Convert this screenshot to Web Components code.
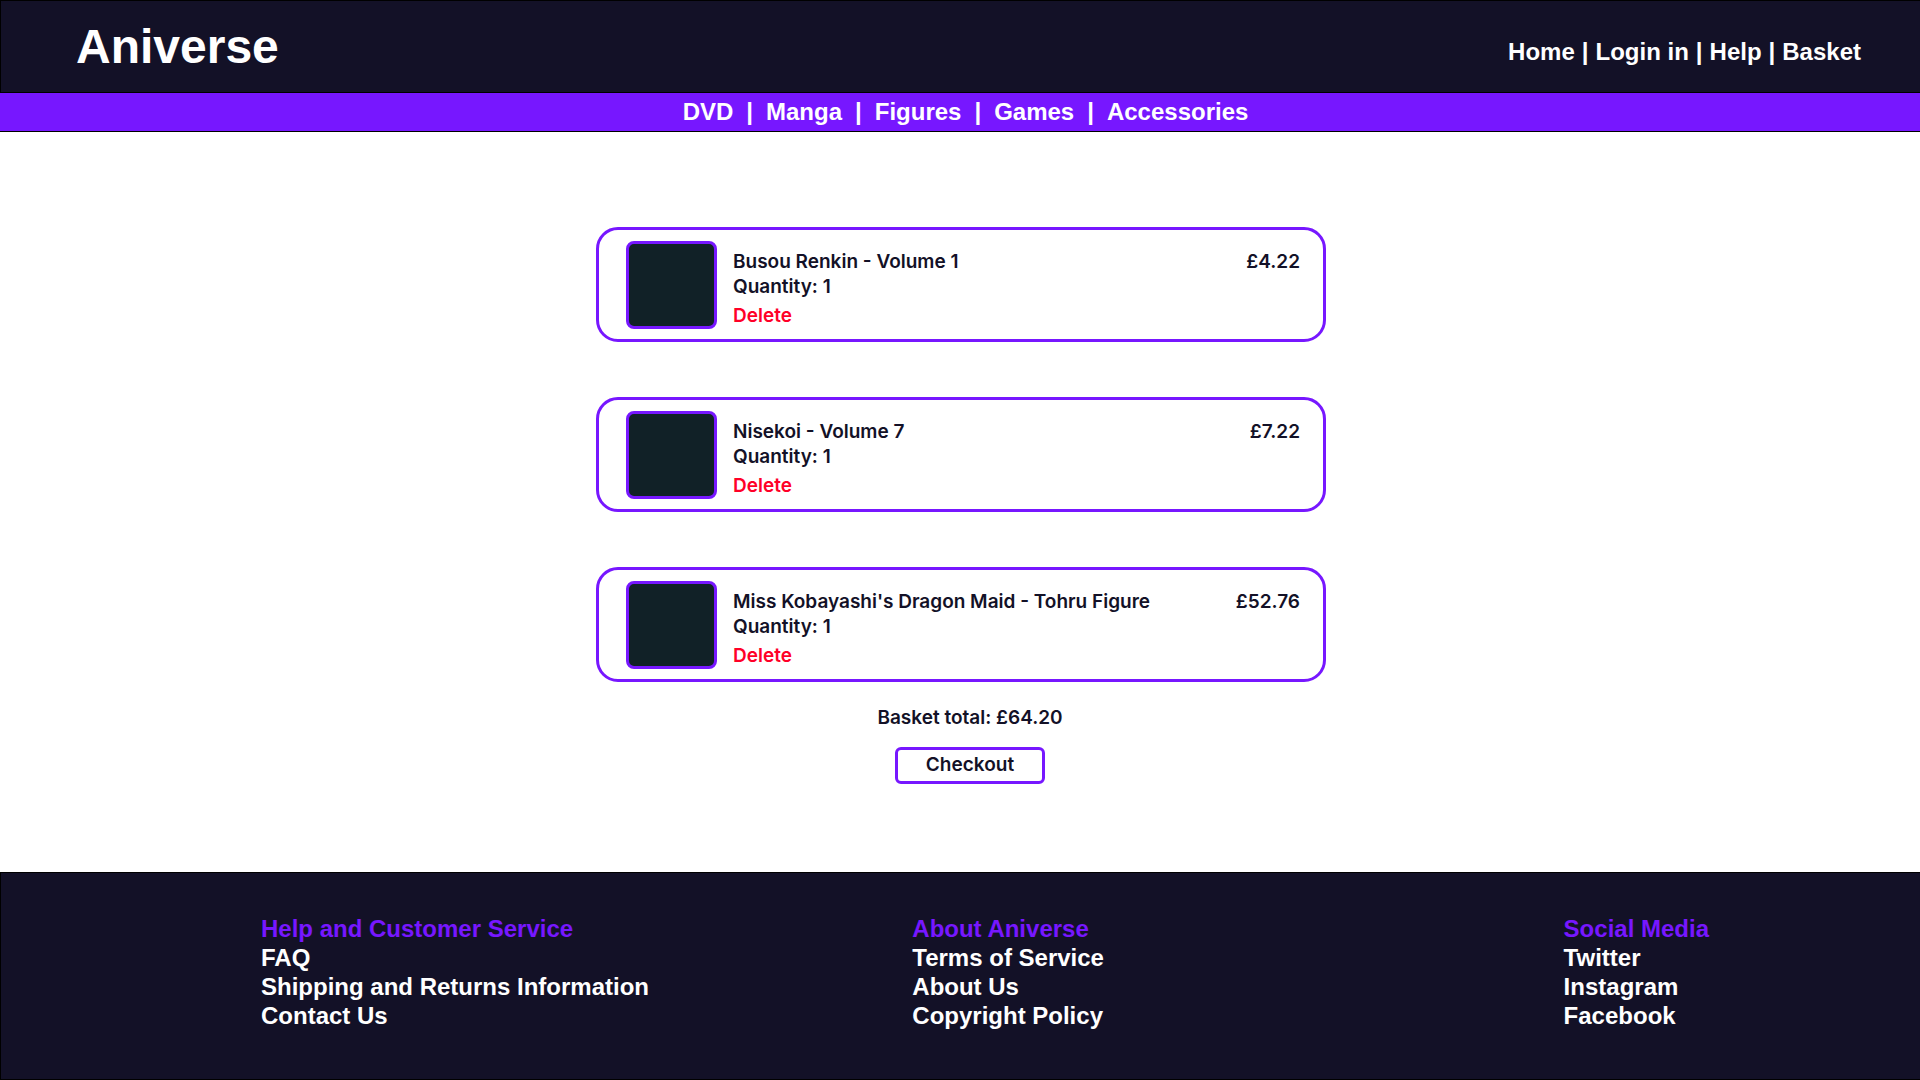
<!DOCTYPE html>
<html lang="en">
<head>
<meta charset="utf-8">
<title>Aniverse - Basket</title>
<style>
  :root {
    --ink: #131127;
    --accent: #7717ff;
    --danger: #ff0028;
  }
  body {
    margin: 0;
    background: #fff;
    color: var(--ink);
    font-family: "Arial Rounded MT Bold", "Liberation Sans", Arial, sans-serif;
    font-weight: 700;
  }
</style>
</head>
<body>
<aniverse-page>
  <site-header slot="header"></site-header>
  <category-nav slot="nav"></category-nav>
  <basket-item price="£4.22" quantity="1">Busou Renkin - Volume 1</basket-item>
  <basket-item price="£7.22" quantity="1">Nisekoi - Volume 7</basket-item>
  <basket-item price="£52.76" quantity="1">Miss Kobayashi's Dragon Maid - Tohru Figure</basket-item>
  <basket-summary slot="summary" total="£64.20"></basket-summary>
  <site-footer slot="footer">
    <footer-column heading="Help and Customer Service" links="FAQ|Shipping and Returns Information|Contact Us"></footer-column>
    <footer-column heading="About Aniverse" links="Terms of Service|About Us|Copyright Policy"></footer-column>
    <footer-column heading="Social Media" links="Twitter|Instagram|Facebook"></footer-column>
  </site-footer>
</aniverse-page>

<script>
class BaseElement extends HTMLElement {
  connectedCallback() {
    if (this.shadowRoot) return;
    this.attachShadow({ mode: "open" }).innerHTML = this.render();
  }
}

const linkRow = (names) => names
  .map((name) => `<a href="#">${name}</a>`)
  .join("<span>|</span>");

customElements.define("aniverse-page", class extends BaseElement {
  render() {
    return `
      <style>
        :host { display: flex; flex-direction: column; min-height: 100vh; }
        main {
          flex: 1;
          display: flex;
          flex-direction: column;
          align-items: center;
          padding: 95px 24px 64px 26px;
          font-family: Inter, "Liberation Sans", sans-serif;
          font-size: 19px;
          font-weight: 600;
          line-height: 25px;
        }
        .items {
          display: flex;
          flex-direction: column;
          gap: 55px;
          width: 100%;
          max-width: 730px;
        }
      </style>
      <slot name="header"></slot>
      <slot name="nav"></slot>
      <main>
        <div class="items"><slot></slot></div>
        <slot name="summary"></slot>
      </main>
      <slot name="footer"></slot>`;
  }
});

customElements.define("site-header", class extends BaseElement {
  render() {
    return `
      <style>
        :host { display: block; }
        header {
          display: flex;
          justify-content: space-between;
          align-items: center;
          box-sizing: border-box;
          min-height: 93px;
          padding: 0 59px 0 75px;
          border: 1px solid #000;
          border-right: 0;
          background: var(--ink);
          color: #fff;
        }
        a { color: inherit; text-decoration: none; }
        .logo { font-size: 48px; line-height: 56px; }
        nav { display: flex; gap: 7px; margin-top: 10px; font-size: 24px; line-height: 29px; }
      </style>
      <header>
        <a class="logo" href="#">Aniverse</a>
        <nav aria-label="Account">${linkRow(["Home", "Login in", "Help", "Basket"])}</nav>
      </header>`;
  }
});

customElements.define("category-nav", class extends BaseElement {
  render() {
    return `
      <style>
        :host { display: block; }
        nav {
          display: flex;
          justify-content: center;
          gap: 13px;
          padding: 4px 0 5px 11px;
          border-bottom: 1px solid #000;
          background: var(--accent);
          color: #fff;
          font-size: 24px;
          line-height: 29px;
        }
        a { color: inherit; text-decoration: none; }
      </style>
      <nav aria-label="Categories">${linkRow(["DVD", "Manga", "Figures", "Games", "Accessories"])}</nav>`;
  }
});

customElements.define("basket-item", class extends BaseElement {
  render() {
    return `
      <style>
        :host { display: block; }
        article {
          display: flex;
          align-items: flex-start;
          gap: 16px;
          padding: 11px 23px 10px 27px;
          border: 3px solid var(--accent);
          border-radius: 22px;
        }
        .cover {
          box-sizing: border-box;
          width: 91px;
          height: 88px;
          border: 3px solid var(--accent);
          border-radius: 8px;
          background: #112127;
        }
        .details { flex: 1; padding-top: 8px; }
        h2, p { margin: 0; font: inherit; }
        button {
          display: block;
          margin: 4px 0 0;
          padding: 0;
          border: 0;
          background: none;
          color: var(--danger);
          font: inherit;
          cursor: pointer;
        }
        .price { padding-top: 8px; }
      </style>
      <article>
        <div class="cover"></div>
        <div class="details">
          <h2><slot></slot></h2>
          <p>Quantity: ${this.getAttribute("quantity")}</p>
          <button type="button">Delete</button>
        </div>
        <p class="price">${this.getAttribute("price")}</p>
      </article>`;
  }
});

customElements.define("basket-summary", class extends BaseElement {
  render() {
    return `
      <style>
        :host {
          display: flex;
          flex-direction: column;
          align-items: center;
          gap: 17px;
          padding: 23px 0 0 18px;
        }
        p { margin: 0; }
        button {
          padding: 2px 28px 4px;
          border: 3px solid var(--accent);
          border-radius: 6px;
          background: #fff;
          color: inherit;
          font: inherit;
          cursor: pointer;
        }
      </style>
      <p>Basket total: ${this.getAttribute("total")}</p>
      <button type="button">Checkout</button>`;
  }
});

customElements.define("site-footer", class extends BaseElement {
  render() {
    return `
      <style>
        :host { display: block; }
        footer {
          display: grid;
          grid-template-columns: 1fr 1fr auto;
          box-sizing: border-box;
          min-height: 208px;
          padding: 41px 211px 40px 260px;
          border: 1px solid #000;
          border-right: 0;
          background: var(--ink);
          color: #fff;
        }
      </style>
      <footer><slot></slot></footer>`;
  }
});

customElements.define("footer-column", class extends BaseElement {
  render() {
    const links = this.getAttribute("links").split("|");
    return `
      <style>
        :host { display: block; font-size: 24px; line-height: 29px; }
        h3 { margin: 0; font: inherit; color: var(--accent); }
        ul { margin: 0; padding: 0; list-style: none; }
        a { color: inherit; text-decoration: none; }
      </style>
      <h3>${this.getAttribute("heading")}</h3>
      <ul>${links.map((name) => `<li><a href="#">${name}</a></li>`).join("")}</ul>`;
  }
});
</script>
</body>
</html>
